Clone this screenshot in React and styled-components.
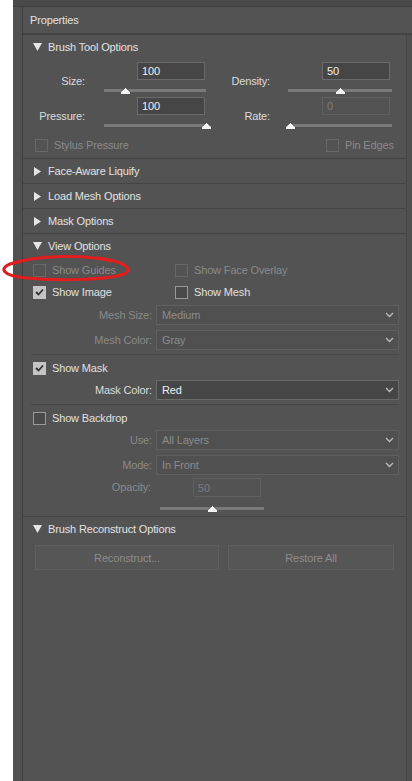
import styled, { createGlobalStyle } from "styled-components";

const GlobalStyle = createGlobalStyle`
  html, body {
    margin: 0;
    padding: 0;
    background: #fff;
  }
  body {
    font-family: "Liberation Sans", Arial, sans-serif;
    font-size: 11px;
    letter-spacing: -0.15px;
  }
`;

const Page = styled.div`
  position: relative;
  display: flex;
  height: 781px;
  overflow: hidden;
  background: #fff;
`;

const WhiteStrip = styled.div`
  width: 13px;
  flex: none;
  background: #fff;
`;

const Panel = styled.div`
  flex: 1;
  display: flex;
  flex-direction: column;
  background: #535353;
`;

const TopStrip = styled.div`
  flex: none;
  height: 6px;
  background: #4a4a4a;
  border-bottom: 1px solid #3e3e3e;
`;

const PanelBody = styled.div`
  flex: 1;
  display: flex;
`;

const Gutter = styled.div`
  width: 9px;
  flex: none;
  background: #515151;
  border-right: 1px solid #3f3f3f;
`;

const MainCol = styled.div`
  flex: 1;
  display: flex;
  flex-direction: column;
`;

const Header = styled.div`
  height: 26px;
  display: flex;
  align-items: center;
  padding-left: 7px;
  color: #e2e2e2;
  border-bottom: 2px solid #434343;
`;

const ContentRow = styled.div`
  flex: 1;
  display: flex;
`;

const Content = styled.div`
  flex: 1;
  display: flex;
  flex-direction: column;
`;

const RightStrip = styled.div`
  width: 5px;
  flex: none;
  background: #4f4f4f;
  border-left: 1px solid #474747;
`;

const Section = styled.div`
  border-bottom: ${(p) => (p.$last ? "none" : "1px solid #444")};
  padding-bottom: ${(p) => p.$pb || 0}px;
`;

const SectionTitle = styled.div`
  height: 24px;
  display: flex;
  align-items: center;
  gap: ${(p) => (p.$open ? 6 : 7)}px;
  padding-left: ${(p) => (p.$open ? 10 : 11)}px;
  color: #e2e2e2;
`;

const Spacer = styled.div`
  height: ${(p) => p.$h}px;
`;

const ParamRow = styled.div`
  display: flex;
`;

const ParamGroup = styled.div`
  display: flex;
  gap: ${(p) => p.$gap}px;
`;

const ParamLabel = styled.div`
  width: ${(p) => p.$w}px;
  text-align: right;
  padding-top: ${(p) => p.$pt ?? 12}px;
  line-height: 14px;
  color: ${(p) => (p.$disabled ? "#8a8a8a" : "#dcdcdc")};
`;

const Control = styled.div`
  width: ${(p) => p.$w}px;
  display: flex;
  flex-direction: column;
  align-items: flex-end;
`;

const NumInput = styled.div`
  box-sizing: border-box;
  width: 68px;
  height: ${(p) => p.$h || 18}px;
  margin-right: ${(p) => p.$mr || 1}px;
  padding-left: 4px;
  display: flex;
  align-items: center;
  background: ${(p) => (p.$disabled ? "#535353" : "#464646")};
  border: 1px solid ${(p) => (p.$disabled ? "#606060" : "#6a6a6a")};
  color: ${(p) => (p.$disabled ? "#7c7c7c" : "#f0f0f0")};
`;

const Slider = styled.div`
  position: relative;
  align-self: stretch;
  height: 17px;
`;

const Track = styled.div`
  position: absolute;
  left: 0;
  right: 0;
  top: ${(p) => p.$top || 9}px;
  height: 3px;
  background: #7a7a7a;
`;

const Thumb = styled.svg`
  position: absolute;
  top: ${(p) => (p.$top || 9) - 2}px;
  left: calc(${(p) => p.$value}% - 5px);
  width: 11px;
  height: 8px;
`;

const CheckRow = styled.div`
  display: grid;
  grid-template-columns: ${(p) => p.$cols};
  align-items: center;
  height: 22px;
  padding-left: ${(p) => p.$pl}px;
  margin-top: ${(p) => p.$mt || 0}px;
`;

const CheckItem = styled.div`
  display: flex;
  align-items: center;
  gap: 6px;
  color: ${(p) => (p.$disabled ? "#8a8a8a" : "#e0e0e0")};
`;

const Box = styled.div`
  box-sizing: border-box;
  width: 13px;
  height: 13px;
  display: flex;
  align-items: center;
  justify-content: center;
  border: 1px solid
    ${(p) => (p.$checked ? "#c4c4c4" : p.$disabled ? "#686868" : "#9a9a9a")};
  background: ${(p) => (p.$checked ? "#c4c4c4" : p.$disabled ? "transparent" : "#4a4a4a")};
`;

const FieldRow = styled.div`
  display: grid;
  grid-template-columns: 129px 243px;
  column-gap: 4px;
  align-items: center;
  height: 20px;
  margin-top: ${(p) => p.$mt || 0}px;
`;

const FieldLabel = styled.div`
  text-align: right;
  color: ${(p) => (p.$disabled ? "#8a8a8a" : "#dcdcdc")};
`;

const Select = styled.div`
  box-sizing: border-box;
  height: 20px;
  display: flex;
  align-items: center;
  justify-content: space-between;
  padding: 0 4px 0 5px;
  background: ${(p) => (p.$disabled ? "#505050" : "#464646")};
  border: 1px solid ${(p) => (p.$disabled ? "#5f5f5f" : "#6a6a6a")};
  color: ${(p) => (p.$disabled ? "#8c8c8c" : "#f0f0f0")};
`;

const Divider = styled.div`
  height: 1px;
  margin: ${(p) => p.$mt || 0}px 7px 0 8px;
  background: #474747;
`;

const OpacityRow = styled.div`
  display: grid;
  grid-template-columns: 128px 104px;
  column-gap: 9px;
  margin-top: 3px;
`;

const ButtonRow = styled.div`
  display: flex;
  gap: 9px;
  padding-left: 12px;
  margin-top: 4px;
`;

const Button = styled.div`
  box-sizing: border-box;
  width: ${(p) => p.$w}px;
  height: 25px;
  display: flex;
  align-items: center;
  justify-content: center;
  background: #565656;
  border: 1px solid #5f5f5f;
  color: #8c8c8c;
`;

const Annotation = styled.svg`
  position: absolute;
  left: 0;
  top: 250px;
  width: 140px;
  height: 40px;
  pointer-events: none;
`;

const Triangle = ({ open }) =>
  open ? (
    <svg width="9" height="8" viewBox="0 0 9 8">
      <polygon points="0,0 9,0 4.5,8" fill="#e6e6e6" />
    </svg>
  ) : (
    <svg width="7" height="9" viewBox="0 0 7 9">
      <polygon points="0,0 7,4.5 0,9" fill="#e6e6e6" />
    </svg>
  );

const Chevron = () => (
  <svg width="9" height="6" viewBox="0 0 9 6">
    <polyline points="1,1 4.5,4.5 8,1" fill="none" stroke="#bdbdbd" strokeWidth="1.3" />
  </svg>
);

const SliderBar = ({ value, top }) => (
  <Slider>
    <Track $top={top} />
    <Thumb $value={value} $top={top} viewBox="0 0 11 8">
      <polygon
        points="5.5,0.5 10.5,5 10.5,7.5 0.5,7.5 0.5,5"
        fill="#f4f4f4"
        stroke="#3c3c3c"
        strokeWidth="0.8"
      />
    </Thumb>
  </Slider>
);

const Check = ({ label, checked, disabled }) => (
  <CheckItem $disabled={disabled}>
    <Box $checked={checked} $disabled={disabled}>
      {checked && (
        <svg width="9" height="8" viewBox="0 0 9 8">
          <polyline points="1,4 3.5,6.5 8,1.5" fill="none" stroke="#333" strokeWidth="1.8" />
        </svg>
      )}
    </Box>
    {label}
  </CheckItem>
);

const Field = ({ label, value, disabled, mt }) => (
  <FieldRow $mt={mt}>
    <FieldLabel $disabled={disabled}>{label}</FieldLabel>
    <Select $disabled={disabled}>
      {value}
      <Chevron />
    </Select>
  </FieldRow>
);

const Collapsed = ({ title }) => (
  <Section>
    <SectionTitle>
      <Triangle />
      {title}
    </SectionTitle>
  </Section>
);

const App = () => {
  return (
    <>
      <GlobalStyle />
      <Page>
        <WhiteStrip />
        <Panel>
          <TopStrip />
          <PanelBody>
            <Gutter />
            <MainCol>
              <Header>Properties</Header>
              <ContentRow>
                <Content>
                  <Section $pb={2}>
                    <SectionTitle $open>
                      <Triangle open />
                      Brush Tool Options
                    </SectionTitle>
                    <Spacer $h={3} />
                    <ParamRow>
                      <ParamGroup $gap={19}>
                        <ParamLabel $w={62}>Size:</ParamLabel>
                        <Control $w={102}>
                          <NumInput>100</NumInput>
                          <SliderBar value={21} />
                        </Control>
                      </ParamGroup>
                      <ParamGroup $gap={18}>
                        <ParamLabel $w={64}>Density:</ParamLabel>
                        <Control $w={104}>
                          <NumInput $mr={2}>50</NumInput>
                          <SliderBar value={50} />
                        </Control>
                      </ParamGroup>
                    </ParamRow>
                    <ParamRow>
                      <ParamGroup $gap={19}>
                        <ParamLabel $w={62}>Pressure:</ParamLabel>
                        <Control $w={102}>
                          <NumInput>100</NumInput>
                          <SliderBar value={100} />
                        </Control>
                      </ParamGroup>
                      <ParamGroup $gap={18}>
                        <ParamLabel $w={64}>Rate:</ParamLabel>
                        <Control $w={104}>
                          <NumInput $mr={2} $disabled>
                            0
                          </NumInput>
                          <SliderBar value={2} />
                        </Control>
                      </ParamGroup>
                    </ParamRow>
                    <CheckRow $cols="291px auto" $pl={12} $mt={2}>
                      <Check label="Stylus Pressure" disabled />
                      <Check label="Pin Edges" disabled />
                    </CheckRow>
                  </Section>

                  <Collapsed title="Face-Aware Liquify" />
                  <Collapsed title="Load Mesh Options" />
                  <Collapsed title="Mask Options" />

                  <Section $pb={2}>
                    <SectionTitle $open>
                      <Triangle open />
                      View Options
                    </SectionTitle>
                    <CheckRow $cols="142px auto" $pl={10} $mt={1}>
                      <Check label="Show Guides" disabled />
                      <Check label="Show Face Overlay" disabled />
                    </CheckRow>
                    <CheckRow $cols="142px auto" $pl={10}>
                      <Check label="Show Image" checked />
                      <Check label="Show Mesh" />
                    </CheckRow>
                    <Field label="Mesh Size:" value="Medium" disabled mt={2} />
                    <Field label="Mesh Color:" value="Gray" disabled mt={5} />
                    <Divider $mt={4} />
                    <CheckRow $cols="auto" $pl={10} $mt={2}>
                      <Check label="Show Mask" checked />
                    </CheckRow>
                    <Field label="Mask Color:" value="Red" mt={1} />
                    <Divider $mt={4} />
                    <CheckRow $cols="auto" $pl={10} $mt={2}>
                      <Check label="Show Backdrop" />
                    </CheckRow>
                    <Field label="Use:" value="All Layers" disabled mt={1} />
                    <Field label="Mode:" value="In Front" disabled mt={5} />
                    <OpacityRow>
                      <ParamLabel $w={128} $pt={2} $disabled>
                        Opacity:
                      </ParamLabel>
                      <Control $w={104}>
                        <NumInput $mr={3} $h={19} $disabled>
                          50
                        </NumInput>
                        <SliderBar value={50} top={10} />
                      </Control>
                    </OpacityRow>
                  </Section>

                  <Section $last>
                    <SectionTitle $open>
                      <Triangle open />
                      Brush Reconstruct Options
                    </SectionTitle>
                    <ButtonRow>
                      <Button $w={184}>Reconstruct...</Button>
                      <Button $w={166}>Restore All</Button>
                    </ButtonRow>
                  </Section>
                </Content>
                <RightStrip />
              </ContentRow>
            </MainCol>
          </PanelBody>
        </Panel>
        <Annotation viewBox="0 250 140 40">
          <path
            d="M 112 261 C 84 254, 38 255, 10 264 C -1 268, 2 276, 26 278 C 58 281, 108 280, 124 274 C 133 270, 128 262, 98 258"
            fill="none"
            stroke="#e11d1d"
            strokeWidth="3"
            strokeLinecap="round"
          />
        </Annotation>
      </Page>
    </>
  );
};

export default App;
